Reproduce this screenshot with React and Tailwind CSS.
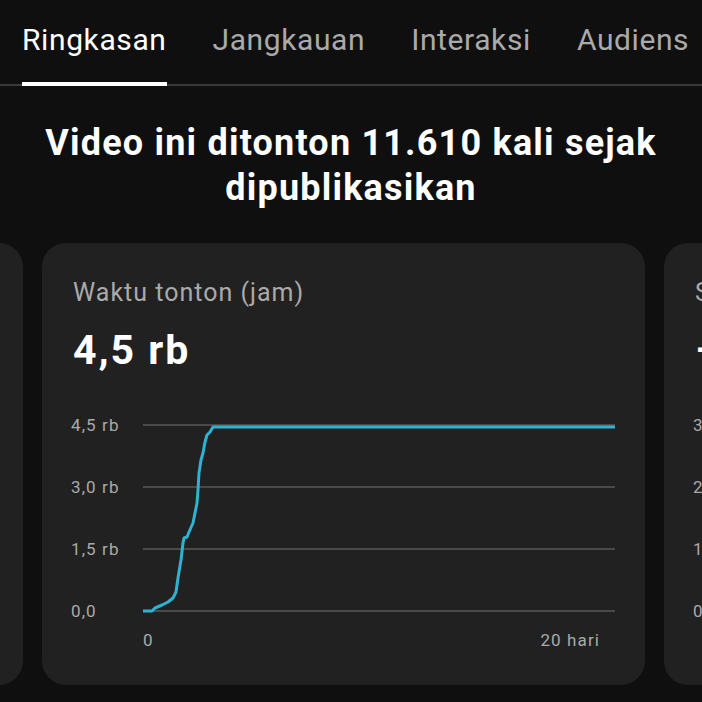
import React from 'react';

const tabs = ['Ringkasan', 'Jangkauan', 'Interaksi', 'Audiens'];

const gridY = [30, 92, 154, 216];

const watchLine = [
    [101, 216], [110, 216], [113, 213], [120, 210], [126, 207], [131, 203],
    [134, 197], [136, 183], [139, 165], [141, 148], [142, 143], [145, 142],
    [147, 137], [151, 128], [153, 118], [155, 108], [156, 95], [157, 78],
    [159, 65], [161, 58], [163, 47], [165, 40], [168, 37], [171, 32], [573, 32]
];

function ChartCard({ title, value, labels, line, xEnd }) {
    return (
        <div className="shrink-0 w-[603px] h-[442px] rounded-[24px] bg-[#212121] flex flex-col">
            <div className="pl-[31px] pt-[36px] text-[25px] leading-[28px] tracking-[1px] text-[#aaaaaa] whitespace-nowrap">{title}</div>
            <div className="pl-[31px] mt-[20px] text-[41px] leading-[46px] tracking-[2px] font-bold text-white">{value}</div>
            <svg width="603" height="265" className="mt-[22px]" style={{ fontFamily: 'Roboto, sans-serif', letterSpacing: '1.1px' }}>
                {gridY.map((y) => (
                    <line key={y} x1="101" x2="573" y1={y} y2={y} stroke="#4a4a4a" strokeWidth="2" />
                ))}
                {labels.map((l, i) => (
                    <text key={l} x="29" y={gridY[i] + 6} fontSize="17" fill="#aaaaaa">{l}</text>
                ))}
                {line && (
                    <polyline points={line.map((p) => p.join(',')).join(' ')} fill="none" stroke="#2eb3d2" strokeWidth="3" strokeLinejoin="round" />
                )}
                <text x="101" y="251" fontSize="17" fill="#aaaaaa">0</text>
                {xEnd && <text x="558" y="251" fontSize="17" fill="#aaaaaa" textAnchor="end">{xEnd}</text>}
            </svg>
        </div>
    );
}

export default function App() {
    return (
        <div className="w-[702px] h-[702px] overflow-hidden bg-[#0f0f0f] text-white" style={{ fontFamily: 'Roboto, "Noto Sans", sans-serif' }}>
            <div className="relative h-[86px] border-b-2 border-[#3a3a3a]">
                <div className="flex gap-[46px] pl-[22px] h-full">
                    {tabs.map((t, i) => (
                        <div key={t} className={`relative h-full flex items-center pb-[5px] text-[30px] tracking-[0.6px] whitespace-nowrap ${i === 0 ? 'text-white' : 'text-[#aaaaaa]'}`}>
                            {t}
                            {i === 0 && <div className="absolute left-0 right-0 bottom-[-2px] h-[4px] bg-white" />}
                        </div>
                    ))}
                </div>
            </div>

            <h1 className="mt-[35px] px-[10px] text-center text-[36px] leading-[45px] tracking-[1.2px] font-bold text-white">
                Video ini ditonton 11.610 kali sejak dipublikasikan
            </h1>

            <div className="mt-[32px] flex gap-[19px] overflow-hidden">
                <div className="-ml-[580px] flex gap-[19px]">
                    <ChartCard title="Penayangan" value="11,6 rb" labels={['12 rb', '8 rb', '4 rb', '0']} />
                    <ChartCard title="Waktu tonton (jam)" value="4,5 rb" labels={['4,5 rb', '3,0 rb', '1,5 rb', '0,0']} line={watchLine} xEnd="20 hari" />
                    <ChartCard title="Subscriber" value="–" labels={['3', '2', '1', '0']} />
                </div>
            </div>
        </div>
    );
}
